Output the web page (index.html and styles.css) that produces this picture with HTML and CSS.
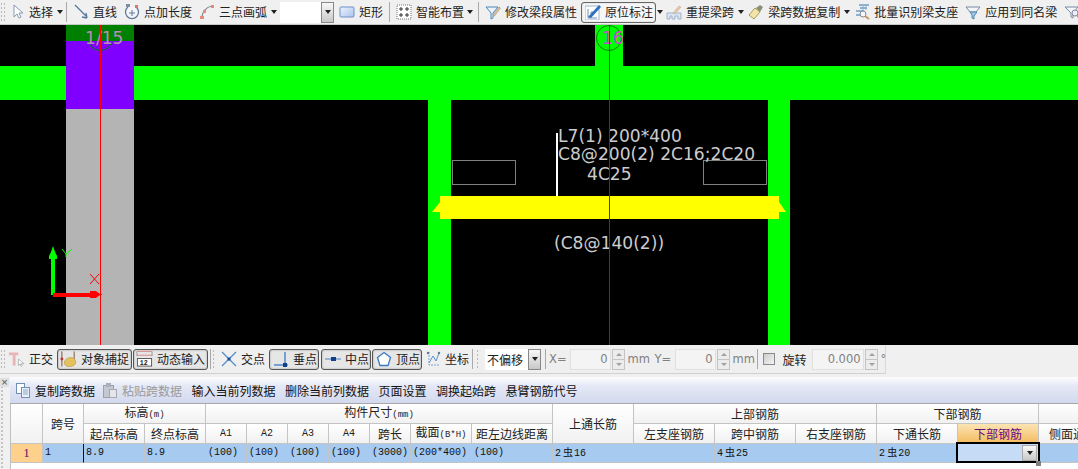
FILE: index.html
```html
<!DOCTYPE html>
<html lang="zh-CN">
<head>
    <meta charset="UTF-8">
    <meta name="viewport" content="width=device-width, initial-scale=1.0">
    <title>原位标注</title>
    <link rel="stylesheet" href="styles.css">
</head>
<body>

<!-- top toolbar -->
<div class="toolbar">
    <span class="grip"></span>
    <span class="tool ml3"><svg class="ic" viewBox="0 0 16 16"><path d="M5 1v12l3-3 2 4 2-1-2-4h4z" fill="#fff" stroke="#8a9ab5"/></svg>选择</span>
    <span class="caret ml4"></span>
    <span class="sep ml3"></span>
    <span class="tool ml6"><svg class="ic" viewBox="0 0 16 16"><path d="M2 1l12 12M14 14l-1-5M14 14l-5-1" fill="none" stroke="#56779c" stroke-width="1.3"/></svg>直线</span>
    <span class="tool ml7"><svg class="ic" viewBox="0 0 16 16"><path d="M4 3a6.5 6.5 0 1 0 8 0" fill="#f4f6fa" stroke="#5f7a99" stroke-width="1.3"/><path d="M8 6v6M5 9h6" stroke="#5f7a99"/><rect x="2" y="0" width="4" height="3" fill="#7d8ea5"/><rect x="11" y="1" width="3" height="3" fill="#d9776c"/></svg>点加长度</span>
    <span class="tool ml7"><svg class="ic" viewBox="0 0 16 16"><path d="M3 14C3 8 7 3 13 2" fill="none" stroke="#7f8c99" stroke-width="1.2"/><rect x="1" y="12" width="4" height="3" fill="#e58a7c"/><rect x="4" y="6" width="3" height="3" fill="#e58a7c"/><rect x="12" y="1" width="3" height="3" fill="#e58a7c"/></svg>三点画弧</span>
    <span class="caret ml4"></span>
    <span class="field ml3"></span>
    <span class="combo-btn"><span class="caret"></span></span>
    <span class="tool ml5"><svg class="ic" viewBox="0 0 16 16"><defs><linearGradient id="rectFill" x1="0" y1="0" x2="1" y2="1"><stop offset="0" stop-color="#eef3fc"/><stop offset="1" stop-color="#a9c3f0"/></linearGradient></defs><rect x="1" y="3" width="14" height="10" rx="1" fill="url(#rectFill)" stroke="#6f90c8"/></svg>矩形</span>
    <span class="sep ml6"></span>
    <span class="tool ml6"><svg class="ic" viewBox="0 0 16 16"><rect x="1" y="1" width="14" height="14" fill="#fff" stroke="#777" stroke-dasharray="1 1"/><path d="M5 3v4M3 5h4M11 3v4M9 5h4M5 9v4M3 11h4M11 9v4M9 11h4" stroke="#333"/></svg>智能布置</span>
    <span class="caret ml3"></span>
    <span class="sep ml5"></span>
    <span class="tool ml6"><svg class="ic" viewBox="0 0 16 16"><path d="M1 3h12L8 9v5l-2 1V9z" fill="#eaf2fa" stroke="#4f87b0"/><path d="M8 11l6-8 1.500 1-6 8z" fill="#d9c6a4" stroke="#a08f70" stroke-width=".6"/></svg>修改梁段属性</span>
    <span class="tool active ml4"><svg class="ic" viewBox="0 0 16 16"><rect x="0" y="2" width="14" height="14" fill="#fff" stroke="#9db4d0"/><path d="M3 5v9h9M6 8h2v2H6z" fill="none" stroke="#6d8db5"/><path d="M3 13L14 1l2 2L6 14z" fill="#2f6ec0"/></svg>原位标注</span>
    <span class="caret ml1"></span>
    <span class="tool ml3"><svg class="ic" viewBox="0 0 16 16"><path d="M1 15V9h14v6h-3v-3H9v3H6v-3H4v3z" fill="#dbe6f2" stroke="#9cb3cc"/><path d="M7 9l6-7 2 1-6 7z" fill="#e5c9b0" stroke="#c9a78c" stroke-width=".6"/></svg>重提梁跨</span>
    <span class="caret ml4"></span>
    <span class="tool ml4"><svg class="ic" viewBox="0 0 16 16"><path d="M1 11l6-7 5 4-6 7z" fill="#f1e6a8" stroke="#a89b5f"/><path d="M8 4l4-3 3 2-3 5z" fill="#8a8f78"/></svg>梁跨数据复制</span>
    <span class="caret ml4"></span>
    <span class="tool ml4"><svg class="ic" viewBox="0 0 16 16"><path d="M5 1h10M6 4h7M2 7h8M2 11h6" stroke="#6f9ac4" stroke-width="1.300"/><path d="M9 2v7M12 1v5" stroke="#8fb2d4"/><circle cx="9" cy="10" r="3" fill="#f7f7f7" stroke="#7d8b99"/><path d="M11 12l4 3" stroke="#c9975f" stroke-width="2"/></svg>批量识别梁支座</span>
    <span class="tool ml7"><svg class="ic" viewBox="0 0 16 16"><path d="M1 3h14l-4 5H5z" fill="#f2f5fa" stroke="#7b8c9f"/><path d="M5 8h7l-3 4v3l-2-1v-3z" fill="#a4c8ea" stroke="#4f87b0"/></svg>应用到同名梁</span>
    <span class="tool ml7"><svg class="ic" viewBox="0 0 16 16"><path d="M1 3h13l-5 6v5l-2-1V9z" fill="#f2f5fa" stroke="#7b8c9f"/><circle cx="11" cy="9" r="3" fill="#eef" stroke="#7d8b99"/><path d="M13 11l2 3" stroke="#c9975f" stroke-width="2"/></svg></span>
</div>

<!-- drawing area -->
<svg class="canvas" viewBox="0 25 1078 320">
    <rect x="66" y="25" width="68" height="320" fill="#b4b4b4"/>
    <rect x="0" y="66" width="1078" height="34" fill="#00ff00"/>
    <rect x="595" y="25" width="28" height="41" fill="#00ff00"/>
    <rect x="428" y="100" width="23" height="245" fill="#00ff00"/>
    <rect x="768" y="100" width="22" height="245" fill="#00ff00"/>
    <rect x="66" y="25" width="68" height="16" fill="#008000"/>
    <rect x="66" y="41" width="68" height="68" fill="#7f00ff"/>

    <circle cx="100" cy="38" r="12.500" fill="none" stroke="#008000"/>
    <circle cx="609" cy="38" r="12.500" fill="none" stroke="#008000"/>
    <text class="axis-a" x="85" y="44">1/15</text>
    <text class="axis-b" x="602" y="44">16</text>

    <rect x="452.500" y="160.500" width="63" height="24" fill="none" stroke="#808080"/>
    <rect x="703.500" y="160.500" width="63" height="24" fill="none" stroke="#808080"/>
    <path d="M440 196H779V202L786 212H779V219H440V212H432L440 202Z" fill="#ffff00"/>
    <rect x="556" y="133" width="2" height="63" fill="#fff"/>

    <text class="note" x="558" y="142">L7(1) 200*400</text>
    <text class="note" x="558" y="160">C8@200(2) 2C16;2C20</text>
    <text class="note" x="587" y="180">4C25</text>
    <text class="note" x="554" y="249">(C8@140(2))</text>

    <rect x="100" y="25" width="1" height="320" fill="#ff0000"/>
    <rect x="609" y="25" width="1" height="320" fill="#d00000"/>

    <path d="M51 295V259H49V256L51 252L53 246L55 252L57 256V259H55V295Z" fill="#00ff00"/>
    <path d="M53 293H90V291H96L100 294H102V295H100L96 298H90V297H53Z" fill="#ff0000"/>
    <path d="M62 249L66 254L72 249M66 254V257" fill="none" stroke="#00ff00"/>
    <path d="M90 274L99 284M99 274L90 284" fill="none" stroke="#ff0000"/>
</svg>

<!-- snap bar -->
<div class="statusrow">
    <div class="statusbar">
        <span class="grip"></span>
        <span class="tool ml2"><svg class="ic-l" viewBox="0 0 18 18"><path d="M1 2h10v3H8v11H5V5H1z" fill="#e8b4b4"/><path d="M11 9v7l2-2 1 3 1-1-1-2h3z" fill="#fff" stroke="#999" stroke-width=".7"/></svg>正交</span>
        <span class="tool toggle wide ml4"><svg class="ic-l" viewBox="0 0 18 18"><path d="M2 1v16M15 1v8" stroke="#7a4a3a"/><circle cx="2" cy="9" r="1.500" fill="#b33"/><path d="M5 11c2-4 9-5 11-1s-1 7-6 7-6-3-5-6z" fill="#e3c25f" stroke="#b6923a" stroke-width=".6"/></svg>对象捕捉</span>
        <span class="tool toggle wide ml1"><svg class="ic-l" viewBox="0 0 18 18"><path d="M1 1h16M1 5h16" stroke="#d98a8a"/><path d="M1 1v5M17 1v5" stroke="#999"/><rect x="1.500" y="8.500" width="15" height="8" fill="#fff" stroke="#555"/><text class="ic-num" x="4" y="15.500">12</text></svg>动态输入</span>
        <span class="sep ml2"></span>
        <span class="grip thin ml1"></span>
        <span class="tool ml6"><svg class="ic" viewBox="0 0 16 16"><path d="M1 1l14 14M15 1L1 15" stroke="#4d8ccc" stroke-width="1.200"/><rect x="6.500" y="6.500" width="3" height="3" fill="#1c4f9c"/></svg>交点</span>
        <span class="tool toggle ml4"><svg class="ic" viewBox="0 0 16 16"><path d="M1 14h14" stroke="#3a7ac4" stroke-width="1.300"/><path d="M12 1v12" stroke="#3a7ac4" stroke-width="1.300"/><rect x="10" y="12" width="4" height="4" fill="#123f8a"/></svg>垂点</span>
        <span class="tool toggle ml2"><svg class="ic" viewBox="0 0 16 16"><path d="M0 8h16" stroke="#6a9ad0" stroke-width="1.300"/><rect x="6" y="6" width="5" height="4" fill="#123f8a"/></svg>中点</span>
        <span class="tool toggle ml1"><svg class="ic" viewBox="0 0 16 16"><path d="M8 1.500L14.500 6.500 12 14.500H4L1.500 6.500z" fill="#fff" stroke="#3a7ac4" stroke-width="1.300"/></svg>顶点</span>
        <span class="tool ml3"><svg class="ic" viewBox="0 0 16 16"><path d="M4 1v13h11" fill="none" stroke="#7aa4d0" stroke-dasharray="2 1"/><path d="M4 12l4-7 3 5 3-8" fill="none" stroke="#5a94d0"/><circle cx="3" cy="2" r="1.200" fill="#678"/><circle cx="14" cy="2" r="1.200" fill="#678"/></svg>坐标</span>
        <span class="sep ml3"></span>
        <span class="grip thin ml3"></span>
        <span class="field offset ml6">不偏移</span>
        <span class="combo-btn"><span class="caret"></span></span>
        <span class="sep ml4"></span>
        <span class="lbl ml3">X=</span>
        <span class="num ml3">0</span>
        <span class="spin ml1"><i></i><b></b></span>
        <span class="lbl mm ml3">mm</span>
        <span class="lbl ml6">Y=</span>
        <span class="num ml3">0</span>
        <span class="spin ml1"><i></i><b></b></span>
        <span class="lbl mm ml3">mm</span>
        <span class="sep ml3"></span>
        <span class="check ml5"></span>
        <span class="txt ml8">旋转</span>
        <span class="num deg ml5">0.000</span>
        <span class="spin ml1"><i></i><b></b></span>
        <span class="lbl ml3">°</span>
    </div>
</div>

<!-- lower panel -->
<div class="lower">
    <div class="side">
        <span class="close-x">×</span>
    </div>
    <div class="panel">
        <div class="gridbar">
            <span class="gitem"><svg class="ic" viewBox="0 0 16 16"><rect x="1.500" y="1.500" width="8" height="10" fill="#fff" stroke="#6f8fb5"/><rect x="6.500" y="5.500" width="8" height="10" fill="#eaf1fa" stroke="#6f8fb5"/><path d="M8 8h5M8 10h5M8 12h5" stroke="#8aa6c8"/></svg>复制跨数据</span>
            <span class="gitem off"><svg class="ic" viewBox="0 0 16 16"><rect x="1.500" y="3.500" width="10" height="12" fill="#c4c8d0" stroke="#9aa0aa"/><rect x="4" y="1" width="5" height="4" fill="#aab0ba"/><rect x="7.500" y="7.500" width="7" height="8" fill="#e4e6ea" stroke="#a4a8b0"/></svg>粘贴跨数据</span>
            <span class="gitem">输入当前列数据</span>
            <span class="gitem">删除当前列数据</span>
            <span class="gitem">页面设置</span>
            <span class="gitem">调换起始跨</span>
            <span class="gitem">悬臂钢筋代号</span>
        </div>
        <div class="tablewrap">
            <table class="span-table">
                <colgroup>
                    <col class="c-head"><col class="c-s"><col class="c-m"><col class="c-m">
                    <col class="c-s"><col class="c-s"><col class="c-s"><col class="c-s"><col class="c-s">
                    <col class="c-m"><col class="c-l"><col class="c-l"><col class="c-l"><col class="c-l">
                    <col class="c-l"><col class="c-l"><col class="c-l"><col class="c-l">
                </colgroup>
                <thead>
                <tr class="r-top">
                    <th rowspan="2"></th>
                    <th rowspan="2">跨号</th>
                    <th colspan="2">标高<small>(m)</small></th>
                    <th colspan="7">构件尺寸<small>(mm)</small></th>
                    <th rowspan="2">上通长筋</th>
                    <th colspan="3">上部钢筋</th>
                    <th colspan="2">下部钢筋</th>
                    <th></th>
                </tr>
                <tr class="r-sub">
                    <th>起点标高</th>
                    <th>终点标高</th>
                    <th class="latin">A1</th>
                    <th class="latin">A2</th>
                    <th class="latin">A3</th>
                    <th class="latin">A4</th>
                    <th>跨长</th>
                    <th>截面<small>(B*H)</small></th>
                    <th>距左边线距离</th>
                    <th>左支座钢筋</th>
                    <th>跨中钢筋</th>
                    <th>右支座钢筋</th>
                    <th>下通长筋</th>
                    <th class="current">下部钢筋</th>
                    <th>侧面通长筋</th>
                </tr>
                </thead>
                <tbody>
                <tr class="r-data">
                    <td class="rownum">1</td>
                    <td class="frozen">1</td>
                    <td>8.9</td>
                    <td>8.9</td>
                    <td>(100)</td>
                    <td>(100)</td>
                    <td>(100)</td>
                    <td>(100)</td>
                    <td>(3000)</td>
                    <td>(200*400)</td>
                    <td>(100)</td>
                    <td>2<span class="rebar">虫</span>16</td>
                    <td></td>
                    <td>4<span class="rebar">虫</span>25</td>
                    <td></td>
                    <td>2<span class="rebar">虫</span>20</td>
                    <td class="editing">
                        <div class="editor"><span class="combo-btn"><span class="caret"></span></span></div>
                        <span class="handle"></span>
                    </td>
                    <td></td>
                </tr>
                </tbody>
            </table>
        </div>
    </div>
</div>

</body>
</html>
```

FILE: styles.css
```css
html, body {
    margin: 0;
    height: 469px;
    overflow: hidden;
}

body {
    font-family: "Noto Sans CJK SC", "Liberation Sans", sans-serif;
    font-size: 12px;
    color: #222;
    background: #f0f0f0;
    width: 1078px;
}

/* toolbars */
.toolbar {
    display: flex;
    align-items: center;
    height: 24px;
    box-sizing: content-box;
    border-bottom: 1px solid #c8c8c8;
    background: #f0f0f0;
    overflow: hidden;
    white-space: nowrap;
}

.grip {
    flex: none;
    width: 6px;
    height: 20px;
    background-image: radial-gradient(#b8b8b8 1px, transparent 1px);
    background-size: 3px 4px;
}

.thin {
    width: 3px;
}

.tool {
    flex: none;
    display: flex;
    align-items: center;
    gap: 4px;
    height: 20px;
    line-height: 20px;
}

.ic {
    flex: none;
    width: 16px;
    height: 16px;
}

.ic-l {
    flex: none;
    width: 17px;
    height: 18px;
}

.ic-num {
    font-family: "Liberation Mono", monospace;
    font-size: 7px;
    font-weight: bold;
    fill: #222;
}

.caret {
    flex: none;
    width: 0;
    height: 0;
    border-left: 3px solid transparent;
    border-right: 3px solid transparent;
    border-top: 4px solid #222;
}

.sep {
    flex: none;
    width: 1px;
    height: 20px;
    background: #a8a8a8;
}

.field {
    flex: none;
    box-sizing: border-box;
    width: 41px;
    height: 21px;
    background: #fff;
}

.combo-btn {
    flex: none;
    box-sizing: border-box;
    display: flex;
    align-items: center;
    justify-content: center;
    width: 13px;
    height: 21px;
    border: 1px solid #888;
    background: linear-gradient(#f8f8f8, #c8c8c8);
}

.active {
    box-sizing: border-box;
    width: 75px;
    height: 21px;
    padding-left: 3px;
    border: 1px solid #666;
    border-radius: 3px;
    background: #f6f6f6;
    box-shadow: inset 0 0 1px #888;
}

.ml1 { margin-left: 1px; }
.ml2 { margin-left: 2px; }
.ml3 { margin-left: 3px; }
.ml4 { margin-left: 4px; }
.ml5 { margin-left: 5px; }
.ml6 { margin-left: 6px; }
.ml7 { margin-left: 7px; }
.ml8 { margin-left: 8px; }

/* drawing */
.canvas {
    display: block;
    width: 1078px;
    height: 320px;
    background: #000;
}

.canvas text {
    font-family: "DejaVu Sans", sans-serif;
    font-size: 17.100px;
}

.note {
    fill: #cccccc;
}

.axis-a {
    fill: #b98ab9;
}

.axis-b {
    fill: #d83cd8;
}

/* snap bar */
.statusrow {
    height: 32px;
    background: #f0f0f0;
}

.statusbar {
    display: flex;
    align-items: center;
    box-sizing: border-box;
    width: 886px;
    height: 29px;
    border-right: 1px solid #d8d8d8;
    border-bottom: 1px solid #d0d0d0;
    background: #efefef;
    white-space: nowrap;
}

.toggle {
    box-sizing: border-box;
    width: 50px;
    height: 21px;
    padding-left: 3px;
    border: 1px solid #555;
    border-radius: 3px;
    background: #e6e6e6;
    box-shadow: inset 0 0 2px #999;
}

.wide {
    width: 75px;
    padding-left: 2px;
}

.offset {
    width: 43px;
    padding-left: 2px;
    line-height: 21px;
}

.lbl {
    flex: none;
    min-width: 17px;
    font-family: "DejaVu Sans", sans-serif;
    font-size: 11.500px;
    color: #808080;
}

.mm {
    width: 21px;
}

.num {
    flex: none;
    box-sizing: border-box;
    width: 41px;
    height: 21px;
    padding-right: 2px;
    border: 1px solid #e0e0e0;
    background: #f4f4f4;
    font-family: "DejaVu Sans", sans-serif;
    font-size: 11.500px;
    line-height: 19px;
    text-align: right;
    color: #808080;
}

.deg {
    width: 52px;
}

.spin {
    flex: none;
    box-sizing: border-box;
    display: flex;
    flex-direction: column;
    width: 13px;
    height: 21px;
    border: 1px solid #c4c4c4;
    background: #ececec;
}

.spin i, .spin b {
    flex: 1;
    position: relative;
}

.spin i {
    border-bottom: 1px solid #c4c4c4;
}

.spin i::after, .spin b::after {
    content: "";
    position: absolute;
    left: 3px;
    top: 3px;
    border-left: 3px solid transparent;
    border-right: 3px solid transparent;
}

.spin i::after {
    border-bottom: 3px solid #a0a0a0;
}

.spin b::after {
    border-top: 3px solid #a0a0a0;
}

.check {
    flex: none;
    box-sizing: border-box;
    width: 12px;
    height: 12px;
    border: 1px solid #8a8a8a;
    background: linear-gradient(135deg, #ccc, #f4f4f4);
}

.txt {
    flex: none;
}

/* lower panel */
.lower {
    display: flex;
    height: 92px;
}

.side {
    flex: none;
    width: 10px;
    background-image: radial-gradient(#c4c4c4 1px, transparent 1px);
    background-size: 4px 4px;
    background-position: 0 12px;
    background-repeat: repeat-y;
}

.close-x {
    display: block;
    width: 9px;
    height: 9px;
    margin-top: 1px;
    background: #e0e0e0;
    font-family: "Liberation Sans", sans-serif;
    font-size: 11px;
    line-height: 9px;
    text-align: center;
    color: #555;
}

.panel {
    flex: none;
    width: 1068px;
    overflow: hidden;
}

.gridbar {
    display: flex;
    align-items: center;
    gap: 9.500px;
    box-sizing: border-box;
    height: 27px;
    padding-left: 5px;
    border-bottom: 1px solid #a8a8a8;
    background: linear-gradient(#fdfdff 0, #e4e8f6 35%, #d3d9ee 100%);
    color: #111;
    white-space: nowrap;
}

.gitem {
    flex: none;
    display: flex;
    align-items: center;
    gap: 4px;
}

.off {
    margin-left: -2.500px;
    color: #9a9a9a;
}

.tablewrap {
    box-sizing: border-box;
    height: 65px;
    overflow: hidden;
    border-left: 1px solid #c0c0c0;
    background: #fff;
}

.span-table {
    table-layout: fixed;
    width: 1109px;
    border-collapse: separate;
    border-spacing: 0;
}

.c-head { width: 32px; }
.c-s { width: 41px; }
.c-m { width: 61px; }
.c-l { width: 81px; }

.span-table th, .span-table td {
    box-sizing: border-box;
    padding: 0;
    border-right: 1px solid #c4c4c4;
    border-bottom: 1px solid #c4c4c4;
    overflow: hidden;
    white-space: nowrap;
}

.span-table th {
    background: linear-gradient(#fff, #f1f1f1);
    font-weight: normal;
    line-height: 16px;
    color: #222;
}

.span-table small {
    font-family: "Liberation Mono", monospace;
    font-size: 9px;
}

.r-top th {
    height: 20px;
}

.r-sub th {
    height: 19px;
}

.span-table th.latin {
    font-family: "Liberation Mono", monospace;
    font-size: 10px;
}

.span-table th.current {
    background: linear-gradient(#fbe4b4, #f4bc60);
    color: #660a80;
}

.r-data td {
    height: 19px;
    padding-left: 2px;
    background: #a6caf0;
    font-family: "Liberation Mono", monospace;
    font-size: 10px;
    line-height: 16px;
    color: #111;
}

.span-table td.rownum {
    padding: 0;
    background: #fdd08c;
    font-family: "Liberation Serif", serif;
    font-size: 12px;
    text-align: center;
    color: #4a0a70;
}

.span-table td.frozen {
    border-right-color: #111;
}

.rebar {
    margin: 0 1px 0 2px;
    font-family: "Noto Sans CJK SC", sans-serif;
    font-size: 10px;
}

.span-table td.editing {
    position: relative;
    overflow: visible;
}

.editor {
    position: absolute;
    left: -2px;
    top: -2px;
    box-sizing: border-box;
    display: flex;
    align-items: center;
    justify-content: flex-end;
    width: 84px;
    height: 21px;
    padding-right: 1px;
    border: 2.500px solid #000;
    background: #c6dbf5;
}

.editor .combo-btn {
    width: 15px;
    height: 16px;
    border-color: #aaa;
}

.handle {
    position: absolute;
    left: 78px;
    top: 17px;
    width: 5px;
    height: 5px;
    background: #808080;
}
```
